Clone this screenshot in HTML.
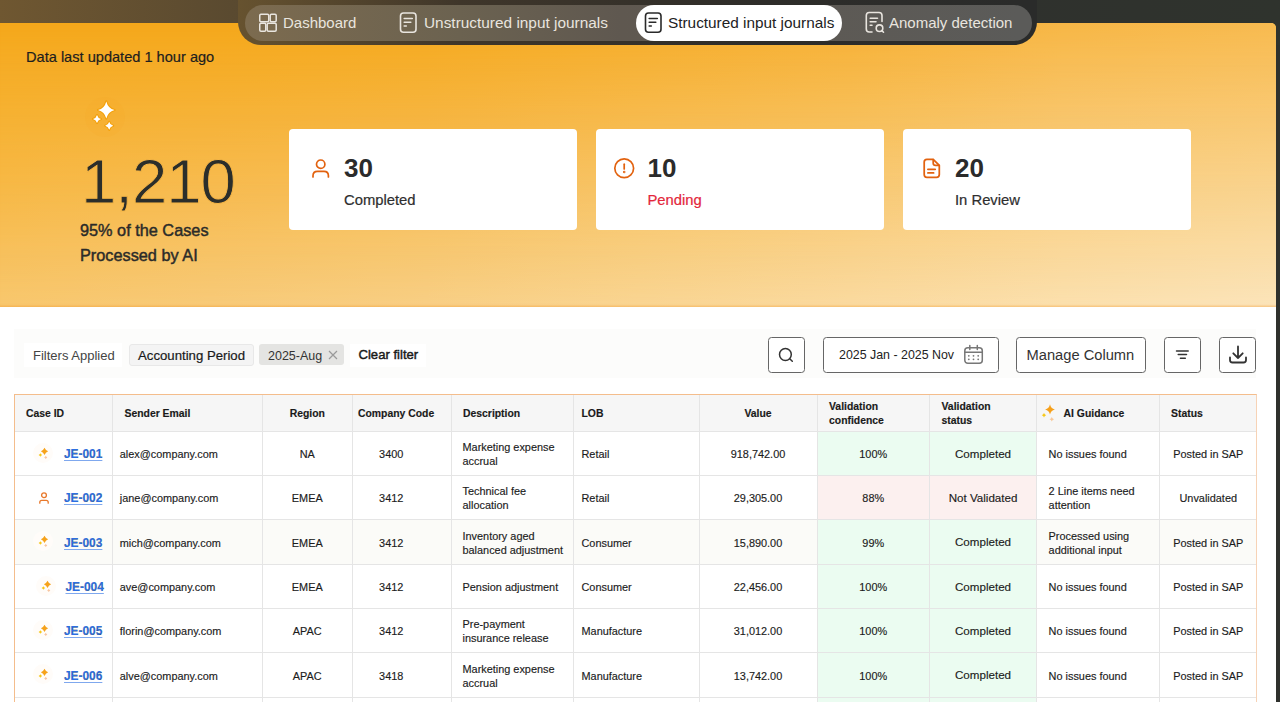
<!DOCTYPE html>
<html><head><meta charset="utf-8">
<style>
*{box-sizing:border-box;margin:0;padding:0}
html,body{width:1280px;height:702px;overflow:hidden}
body{position:relative;background:#2f312d;font-family:"Liberation Sans",sans-serif;color:#222}
.abs{position:absolute;white-space:nowrap}
.topbar{position:absolute;left:0;top:0;width:1280px;height:45px;background:linear-gradient(90deg,#6f5731 0%,#5a4a30 18.1%,#4a3d2a 35.9%,#3a3228 50%,#2f312d 78%,#2f332d 100%)}
.hero{position:absolute;left:0;top:22.5px;width:1276px;height:284.5px;border-top-right-radius:5px;overflow:hidden;background:linear-gradient(90deg,#f5ab23,#f7ba4e)}
.hero .ly{position:absolute;left:0;top:0;width:100%;height:100%}
.hero .sh{position:absolute;left:0;top:0;width:100%;height:100%;box-shadow:inset 0 -2.5px 1.5px -1px rgba(240,150,40,.35)}
.main{position:absolute;left:0;top:307px;width:1276px;height:395px;background:#fff}
.navmask{position:absolute;left:238px;top:0;width:799px;height:45px;border-radius:0 0 23px 23px;overflow:hidden}
.navmask .g{position:absolute;left:-238px;top:0;width:1280px;height:45px;background:linear-gradient(90deg,#6f5731 0%,#66522f 18.75%,#3f362a 35.9%,#2e2d2a 60%,#2a2b2a 80%)}
.navin{position:absolute;left:245px;top:4.8px;width:786.5px;height:36px;border-radius:18px;background:linear-gradient(90deg,#7c6b4f 0%,#6b6250 27.3%,#5f5850 47.7%,#5b5b59 98.5%)}
.tab{position:absolute;top:4.8px;height:36px;line-height:36px;font-size:15px;color:#e9e5df;white-space:nowrap}
.tabact{position:absolute;left:636px;top:4.8px;width:206px;height:36px;border-radius:18px;background:#fff}
.tab svg{position:absolute}
.upd{left:26px;top:49px;font-size:14.6px;color:#1e1e1e;-webkit-text-stroke:0.2px #1e1e1e}
.big{left:81px;top:144.7px;font-size:63.5px;color:#2b2e2b;letter-spacing:-1px;-webkit-text-stroke:0.9px #f6b646}
.sub{left:80px;top:218.4px;font-size:16.3px;line-height:24.8px;color:#2b2b29;-webkit-text-stroke:0.45px #2b2b29}
.card{position:absolute;top:129px;width:288px;height:101px;background:#fff;border-radius:4px}
.card .num{position:absolute;left:55px;top:24px;font-size:26px;font-weight:bold;color:#2b2b2b}
.card .lbl{position:absolute;left:55px;top:63px;font-size:14.8px;color:#2e2e2e;-webkit-text-stroke:0.2px currentColor}
.card svg{position:absolute}
.fbar{position:absolute;left:14px;top:329px;width:1242px;height:49px;background:#fcfcfb}
.btn{position:absolute;top:337px;height:36px;border:1.3px solid #666;border-radius:3.5px;background:#fff}
.btn svg{position:absolute}
.tbl{position:absolute;left:14px;top:394px;width:1243px;height:400px;border:1px solid #f4bd8c;border-right-color:#f7d3b6;border-bottom:none}
.thbg{position:absolute;left:15px;top:395px;width:1241px;height:36.5px;background:#f6f6f6}
.td{position:absolute;display:flex;align-items:center;font-size:10.9px;color:#1c1c1c;white-space:nowrap;padding-top:1.5px;-webkit-text-stroke:0.15px #1c1c1c}
.th{font-weight:bold;font-size:10.4px;line-height:13.5px;color:#1a1a1a;padding-top:2px}
.desc{line-height:14px}
.vs{font-size:11.6px;padding-top:0!important}
.td1 a{color:#2c6fe3;font-weight:bold;font-size:11.9px;text-decoration:underline;text-underline-offset:2px;text-decoration-thickness:1px;text-decoration-color:#7fa8ee}
.rowbg{position:absolute;left:15px;width:1241px}
.vl{position:absolute;top:395px;width:1px;height:310px;background:#e5e5e5}
.hl{position:absolute;left:15px;width:1241px;height:1px;background:#e5e5e5}
.ic{position:absolute}
</style></head><body>
<div class="topbar"></div>
<div class="hero"><div class="ly" style="background:linear-gradient(90deg,#f5a81b 0.0%,#f5a81b 16.7%,#f5a91d 33.4%,#f6ad28 50.0%,#f6b135 66.7%,#f7b746 83.4%,#f8bb50 100.0%)"></div><div class="ly" style="background:linear-gradient(90deg,#f6ac25 0.0%,#f6ac26 16.7%,#f6ae2b 33.4%,#f6b237 50.0%,#f7b643 66.7%,#f8bd55 83.4%,#f8c05e 100.0%);-webkit-mask-image:linear-gradient(to bottom,transparent 0.0px,#000 37.5px);mask-image:linear-gradient(to bottom,transparent 0.0px,#000 37.5px)"></div><div class="ly" style="background:linear-gradient(90deg,#f6b131 0.0%,#f6b236 16.7%,#f6b43d 33.4%,#f7b94a 50.0%,#f7be56 66.7%,#f8c468 83.4%,#f9c871 100.0%);-webkit-mask-image:linear-gradient(to bottom,transparent 37.5px,#000 87.5px);mask-image:linear-gradient(to bottom,transparent 37.5px,#000 87.5px)"></div><div class="ly" style="background:linear-gradient(90deg,#f7b844 0.0%,#f7ba4d 16.7%,#f7bd57 33.4%,#f7c364 50.0%,#f8c871 66.7%,#f9ce81 83.4%,#f9d28b 100.0%);-webkit-mask-image:linear-gradient(to bottom,transparent 87.5px,#000 157.5px);mask-image:linear-gradient(to bottom,transparent 87.5px,#000 157.5px)"></div><div class="ly" style="background:linear-gradient(90deg,#f7c05b 0.0%,#f7c365 16.7%,#f7c770 33.4%,#f8cd7e 50.0%,#f9d28b 66.7%,#fad89a 83.4%,#fadca5 100.0%);-webkit-mask-image:linear-gradient(to bottom,transparent 157.5px,#000 227.5px);mask-image:linear-gradient(to bottom,transparent 157.5px,#000 227.5px)"></div><div class="ly" style="background:linear-gradient(90deg,#f8c76e 0.0%,#f7ca79 16.7%,#f8cf85 33.4%,#f9d593 50.0%,#fadaa0 66.7%,#fbe0ae 83.4%,#fbe4ba 100.0%);-webkit-mask-image:linear-gradient(to bottom,transparent 227.5px,#000 284.5px);mask-image:linear-gradient(to bottom,transparent 227.5px,#000 284.5px)"></div><div class="sh"></div></div>
<div class="main"></div>
<div class="navmask"><div class="g"></div></div>
<div class="navin"></div>
<div class="tabact"></div>

<div class="tab" style="left:283px">Dashboard</div>
<svg class="ic" style="left:258px;top:13px" width="20" height="20" viewBox="0 0 20 20" fill="none" stroke="#e9e5df" stroke-width="1.5"><rect x="1.75" y="1.25" width="9" height="7.5" rx="1.2"/><rect x="12.2" y="1.25" width="6" height="7.5" rx="1.2"/><rect x="1.75" y="10.2" width="6" height="8" rx="1.2"/><rect x="9.2" y="10.2" width="9" height="8" rx="1.2"/></svg>
<div class="tab" style="left:424px;font-size:15.4px">Unstructured input journals</div>
<svg class="ic" style="left:398px;top:11px" width="20" height="23" viewBox="0 0 20 23" fill="none" stroke="#e9e5df" stroke-width="1.6" stroke-linecap="round"><rect x="2.5" y="2" width="15.5" height="19.3" rx="3"/><path d="M6.2 7.5H14.3M6.2 11.3H12.8M6.2 15H8.3"/></svg>
<div class="tab" style="left:668px;color:#222;font-size:15.35px">Structured input journals</div>
<svg class="ic" style="left:643px;top:11px" width="20" height="23" viewBox="0 0 20 23" fill="none" stroke="#2a2a2a" stroke-width="1.6" stroke-linecap="round"><rect x="2.5" y="2" width="15.5" height="19.3" rx="3"/><path d="M6.2 7.5H14.3M6.2 11.3H12.8M6.2 15H8.3"/></svg>
<div class="tab" style="left:889px">Anomaly detection</div>
<svg class="ic" style="left:864px;top:11px" width="22" height="24" viewBox="0 0 22 24" fill="none" stroke="#e9e5df" stroke-width="1.6" stroke-linecap="round"><path d="M8 21H5.2Q2.3 21 2.3 18V4.6Q2.3 1.5 5.2 1.5H15Q18 1.5 18 4.6V10.5"/><path d="M6.2 7.2H13.5M6.2 10.7H12M6.2 14.2H8"/><circle cx="15.5" cy="17.2" r="3.3"/><path d="M17.9 19.6L19.5 21.2"/></svg>

<div class="abs upd">Data last updated 1 hour ago</div>

<svg class="ic" style="left:84px;top:96px" width="44" height="44" viewBox="0 0 44 44"><circle cx="21" cy="21" r="20" fill="#f4a724" opacity=".12"/><g stroke="#f3a00a" stroke-width="2.2" paint-order="stroke" stroke-linejoin="round"><path d="M22.30 5.40Q23.96 12.28 30.60 14.00Q23.96 15.72 22.30 22.60Q20.64 15.72 14.00 14.00Q20.64 12.28 22.30 5.40Z" fill="#fff"/><path d="M13.00 19.00Q13.80 22.20 17.00 23.00Q13.80 23.80 13.00 27.00Q12.20 23.80 9.00 23.00Q12.20 22.20 13.00 19.00Z" fill="#fff"/><path d="M25.20 25.80Q26.00 29.00 29.20 29.80Q26.00 30.60 25.20 33.80Q24.40 30.60 21.20 29.80Q24.40 29.00 25.20 25.80Z" fill="#fff"/></g></svg>
<div class="abs big">1,210</div>
<div class="abs sub">95% of the Cases<br>Processed by AI</div>

<div class="card" style="left:289px"><svg style="left:21px;top:28px" width="22" height="22" viewBox="0 0 22 22" fill="none" stroke="#e2620f" stroke-width="1.7" stroke-linecap="round"><circle cx="10.7" cy="7.2" r="4.2"/><path d="M3 20V18.8Q3 14.4 7.4 14.4H14Q18.4 14.4 18.4 18.8V20"/></svg><div class="num">30</div><div class="lbl">Completed</div></div>
<div class="card" style="left:596px"><svg style="left:17px;top:28px" width="22" height="22" viewBox="0 0 22 22" fill="none" stroke="#e2620f" stroke-width="1.7" stroke-linecap="round"><circle cx="11.2" cy="11.2" r="9.4"/><path d="M11.2 7.2V12"/><circle cx="11.2" cy="15" r=".4" fill="#e2620f"/></svg><div class="num" style="left:51.5px">10</div><div class="lbl" style="color:#e3263b;left:51.5px">Pending</div></div>
<div class="card" style="left:903px"><svg style="left:17px;top:28px" width="22" height="22" viewBox="0 0 22 22" fill="none" stroke="#e2620f" stroke-width="1.75" stroke-linecap="round" stroke-linejoin="round"><path d="M4.2 5Q4.2 2.3 6.9 2.3H13.2L19.3 8.4V17.6Q19.3 20.4 16.5 20.4H6.9Q4.2 20.4 4.2 17.6Z"/><path d="M13.2 2.6V6Q13.2 8.4 15.6 8.4H19"/><path d="M7.9 12.3H15.2M7.9 15.9H13.6"/></svg><div class="num" style="left:52px">20</div><div class="lbl" style="left:52px">In Review</div></div>

<div class="fbar"></div>
<div class="abs" style="left:23.5px;top:343.3px;width:98px;height:23.5px;background:#fff"></div>
<div class="abs" style="left:33px;top:347.5px;font-size:13px;color:#444">Filters Applied</div>
<div class="abs" style="left:129px;top:343.5px;width:124.5px;height:22.5px;background:#f4f4f4;border:1px solid #e8e8e8;border-radius:3px"></div>
<div class="abs" style="left:138px;top:347.5px;font-size:13.2px;color:#1a1a1a;-webkit-text-stroke:0.2px #1a1a1a">Accounting Period</div>
<div class="abs" style="left:259px;top:343.7px;width:84.5px;height:21.5px;background:#e4e4e2;border-radius:3px"></div>
<div class="abs" style="left:268px;top:349px;font-size:12.5px;color:#333">2025-Aug</div>
<svg class="ic" style="left:328px;top:350px" width="10" height="10" viewBox="0 0 10 10" stroke="#9a9a9a" stroke-width="1.2"><path d="M1 1L9 9M9 1L1 9"/></svg>
<div class="abs" style="left:350px;top:343.5px;width:76px;height:23px;background:#fff"></div>
<div class="abs" style="left:358.5px;top:347px;font-size:13.1px;color:#1a1a1a;-webkit-text-stroke:0.45px #1a1a1a">Clear filter</div>

<div class="btn" style="left:768px;width:37px"><svg style="left:8px;top:7.5px" width="18" height="18" viewBox="0 0 18 18" fill="none" stroke="#333" stroke-width="1.5" stroke-linecap="round"><circle cx="8.4" cy="8.5" r="5.9"/><path d="M12.7 12.8L15.3 15.3"/></svg></div>
<div class="btn" style="left:823px;width:176px"></div>
<div class="abs" style="left:839px;top:348px;font-size:12.4px;color:#222">2025 Jan - 2025 Nov</div>
<svg class="ic" style="left:963px;top:344px" width="21" height="21" viewBox="0 0 21 21" fill="none" stroke="#777" stroke-width="1.5" stroke-linecap="round"><rect x="1.8" y="3.8" width="17.5" height="15.5" rx="3"/><path d="M1.8 8.3H19.3M6.8 1.5V5.5M14.3 1.5V5.5"/><g fill="#777" stroke="none"><circle cx="5.8" cy="11.8" r=".9"/><circle cx="10.5" cy="11.8" r=".9"/><circle cx="15.2" cy="11.8" r=".9"/><circle cx="5.8" cy="15.3" r=".9"/><circle cx="10.5" cy="15.3" r=".9"/><circle cx="15.2" cy="15.3" r=".9"/></g></svg>
<div class="btn" style="left:1016px;width:129.5px"></div>
<div class="abs" style="left:1026.5px;top:347px;font-size:14.7px;color:#333">Manage Column</div>
<div class="btn" style="left:1164px;width:37px"><svg style="left:10px;top:11.3px" width="16" height="12" viewBox="0 0 16 12" fill="none" stroke="#333" stroke-width="1.5" stroke-linecap="round"><path d="M1.5 2H13.2M3.2 5.6H11.5M5.4 9.3H10.3"/></svg></div>
<div class="btn" style="left:1219px;width:37px"><svg style="left:8px;top:6px" width="20" height="20" viewBox="0 0 20 20" fill="none" stroke="#333" stroke-width="1.8" stroke-linecap="round" stroke-linejoin="round"><path d="M10 2.5V14M5.3 9.3L10 14L14.7 9.3"/><path d="M2 13.5V16Q2 18.5 4.5 18.5H15.5Q18 18.5 18 16V13.5"/></svg></div>

<div class="tbl"></div>
<div class="thbg"></div>
<div class="rowbg" style="left:817px;width:219.5999999999999px;top:431.5px;height:44.0px;background:#ebfcf1"></div>
<div class="rowbg" style="left:817px;width:219.5999999999999px;top:475.5px;height:44.200000000000045px;background:#fcf0ef"></div>
<div class="rowbg" style="top:519.7px;height:44.299999999999955px;background:#fbfbf8"></div>
<div class="rowbg" style="left:817px;width:219.5999999999999px;top:519.7px;height:44.299999999999955px;background:#ebfcf1"></div>
<div class="rowbg" style="left:817px;width:219.5999999999999px;top:564px;height:44.200000000000045px;background:#ebfcf1"></div>
<div class="rowbg" style="left:817px;width:219.5999999999999px;top:608.2px;height:44.299999999999955px;background:#ebfcf1"></div>
<div class="rowbg" style="left:817px;width:219.5999999999999px;top:652.5px;height:44.5px;background:#ebfcf1"></div>
<div class="rowbg" style="left:817px;width:219.5999999999999px;top:697px;height:44px;background:#ebfcf1"></div>
<div class="vl" style="left:112.0px"></div>
<div class="vl" style="left:261.5px"></div>
<div class="vl" style="left:352.0px"></div>
<div class="vl" style="left:450.5px"></div>
<div class="vl" style="left:573.0px"></div>
<div class="vl" style="left:698.5px"></div>
<div class="vl" style="left:816.5px"></div>
<div class="vl" style="left:929.0px"></div>
<div class="vl" style="left:1036.1px"></div>
<div class="vl" style="left:1159.0px"></div>
<div class="hl" style="top:431.0px"></div>
<div class="hl" style="top:475.0px"></div>
<div class="hl" style="top:519.2px"></div>
<div class="hl" style="top:563.5px"></div>
<div class="hl" style="top:607.7px"></div>
<div class="hl" style="top:652.0px"></div>
<div class="hl" style="top:696.5px"></div>
<div class="td th" style="left:14px;top:394px;width:98.5px;height:37.5px;padding-left:12px;justify-content:flex-start;"><div>Case ID</div></div>
<div class="td th" style="left:112.5px;top:394px;width:149.5px;height:37.5px;padding-left:12px;justify-content:flex-start;"><div>Sender Email</div></div>
<div class="td th" style="left:262px;top:394px;width:90.5px;height:37.5px;justify-content:center;padding-left:0px;"><div>Region</div></div>
<div class="td th" style="left:352.5px;top:394px;width:98.5px;height:37.5px;padding-left:5.5px;justify-content:flex-start;"><div>Company Code</div></div>
<div class="td th" style="left:451px;top:394px;width:122.5px;height:37.5px;padding-left:12px;justify-content:flex-start;"><div>Description</div></div>
<div class="td th" style="left:573.5px;top:394px;width:125.5px;height:37.5px;padding-left:8px;justify-content:flex-start;"><div>LOB</div></div>
<div class="td th" style="left:699px;top:394px;width:118px;height:37.5px;justify-content:center;padding-left:0px;"><div>Value</div></div>
<div class="td th" style="left:817px;top:394px;width:112.5px;height:37.5px;padding-left:12px;justify-content:flex-start;"><div>Validation<br>confidence</div></div>
<div class="td th" style="left:929.5px;top:394px;width:107.09999999999991px;height:37.5px;padding-left:12px;justify-content:flex-start;"><div>Validation<br>status</div></div>
<div class="td th" style="left:1036.6px;top:394px;width:122.90000000000009px;height:37.5px;padding-left:27px;justify-content:flex-start;"><div>AI Guidance</div></div>
<div class="td th" style="left:1159.5px;top:394px;width:97.5px;height:37.5px;padding-left:11.5px;justify-content:flex-start;"><div>Status</div></div>
<svg class="ic" width="22" height="22" viewBox="0 0 22 22" style="left:32px;top:442.0px"><circle cx="11" cy="11" r="10" fill="#fffcf9"/><path d="M12.50 5.70Q13.58 8.22 16.10 9.30Q13.58 10.38 12.50 12.90Q11.42 10.38 8.90 9.30Q11.42 8.22 12.50 5.70Z" fill="#f6a21a"/><path d="M8.40 11.20Q8.94 12.46 10.20 13.00Q8.94 13.54 8.40 14.80Q7.86 13.54 6.60 13.00Q7.86 12.46 8.40 11.20Z" fill="#f6c81a"/><path d="M13.75 13.80Q14.23 14.92 15.35 15.40Q14.23 15.88 13.75 17.00Q13.27 15.88 12.15 15.40Q13.27 14.92 13.75 13.80Z" fill="#f8c6a0"/></svg>
<div class="td td1" style="left:14px;top:431.5px;width:98.5px;height:44.0px;padding-left:50.0px;justify-content:flex-start;"><div><a>JE-001</a></div></div>
<div class="td " style="left:112.5px;top:431.5px;width:149.5px;height:44.0px;padding-left:7.3px;justify-content:flex-start;"><div>alex@company.com</div></div>
<div class="td " style="left:262px;top:431.5px;width:90.5px;height:44.0px;justify-content:center;padding-left:0px;"><div>NA</div></div>
<div class="td " style="left:352.5px;top:431.5px;width:98.5px;height:44.0px;padding-left:26.6px;justify-content:flex-start;"><div>3400</div></div>
<div class="td desc" style="left:451px;top:431.5px;width:122.5px;height:44.0px;padding-left:11.5px;justify-content:flex-start;"><div>Marketing expense<br>accrual</div></div>
<div class="td " style="left:573.5px;top:431.5px;width:125.5px;height:44.0px;padding-left:8px;justify-content:flex-start;"><div>Retail</div></div>
<div class="td " style="left:699px;top:431.5px;width:118px;height:44.0px;justify-content:center;padding-left:0px;"><div>918,742.00</div></div>
<div class="td " style="left:817px;top:431.5px;width:112.5px;height:44.0px;justify-content:center;padding-left:0px;"><div>100%</div></div>
<div class="td vs" style="left:929.5px;top:431.5px;width:107.09999999999991px;height:44.0px;justify-content:center;padding-left:0px;"><div>Completed</div></div>
<div class="td desc" style="left:1036.6px;top:431.5px;width:122.90000000000009px;height:44.0px;padding-left:12px;justify-content:flex-start;"><div>No issues found</div></div>
<div class="td " style="left:1159.5px;top:431.5px;width:97.5px;height:44.0px;justify-content:center;padding-left:0px;"><div>Posted in SAP</div></div>
<svg class="ic" width="14" height="14" viewBox="0 0 14 14" style="left:36.5px;top:490.6px" fill="none" stroke="#e8782a" stroke-width="1.3" stroke-linecap="round"><circle cx="7" cy="4.2" r="2.4"/><path d="M2.8 12.2 V11.2 Q2.8 9.3 4.8 9.3 H9.2 Q11.2 9.3 11.2 11.2 V12.2"/></svg>
<div class="td td1" style="left:14px;top:475.5px;width:98.5px;height:44.200000000000045px;padding-left:50.0px;justify-content:flex-start;"><div><a>JE-002</a></div></div>
<div class="td " style="left:112.5px;top:475.5px;width:149.5px;height:44.200000000000045px;padding-left:7.3px;justify-content:flex-start;"><div>jane@company.com</div></div>
<div class="td " style="left:262px;top:475.5px;width:90.5px;height:44.200000000000045px;justify-content:center;padding-left:0px;"><div>EMEA</div></div>
<div class="td " style="left:352.5px;top:475.5px;width:98.5px;height:44.200000000000045px;padding-left:26.6px;justify-content:flex-start;"><div>3412</div></div>
<div class="td desc" style="left:451px;top:475.5px;width:122.5px;height:44.200000000000045px;padding-left:11.5px;justify-content:flex-start;"><div>Technical fee<br>allocation</div></div>
<div class="td " style="left:573.5px;top:475.5px;width:125.5px;height:44.200000000000045px;padding-left:8px;justify-content:flex-start;"><div>Retail</div></div>
<div class="td " style="left:699px;top:475.5px;width:118px;height:44.200000000000045px;justify-content:center;padding-left:0px;"><div>29,305.00</div></div>
<div class="td " style="left:817px;top:475.5px;width:112.5px;height:44.200000000000045px;justify-content:center;padding-left:0px;"><div>88%</div></div>
<div class="td vs" style="left:929.5px;top:475.5px;width:107.09999999999991px;height:44.200000000000045px;justify-content:center;padding-left:0px;"><div>Not Validated</div></div>
<div class="td desc" style="left:1036.6px;top:475.5px;width:122.90000000000009px;height:44.200000000000045px;padding-left:12px;justify-content:flex-start;"><div>2 Line items need<br>attention</div></div>
<div class="td " style="left:1159.5px;top:475.5px;width:97.5px;height:44.200000000000045px;justify-content:center;padding-left:0px;"><div>Unvalidated</div></div>
<svg class="ic" width="22" height="22" viewBox="0 0 22 22" style="left:32px;top:530.35px"><circle cx="11" cy="11" r="10" fill="#fffcf9"/><path d="M12.50 5.70Q13.58 8.22 16.10 9.30Q13.58 10.38 12.50 12.90Q11.42 10.38 8.90 9.30Q11.42 8.22 12.50 5.70Z" fill="#f6a21a"/><path d="M8.40 11.20Q8.94 12.46 10.20 13.00Q8.94 13.54 8.40 14.80Q7.86 13.54 6.60 13.00Q7.86 12.46 8.40 11.20Z" fill="#f6c81a"/><path d="M13.75 13.80Q14.23 14.92 15.35 15.40Q14.23 15.88 13.75 17.00Q13.27 15.88 12.15 15.40Q13.27 14.92 13.75 13.80Z" fill="#f8c6a0"/></svg>
<div class="td td1" style="left:14px;top:519.7px;width:98.5px;height:44.299999999999955px;padding-left:50.0px;justify-content:flex-start;"><div><a>JE-003</a></div></div>
<div class="td " style="left:112.5px;top:519.7px;width:149.5px;height:44.299999999999955px;padding-left:7.3px;justify-content:flex-start;"><div>mich@company.com</div></div>
<div class="td " style="left:262px;top:519.7px;width:90.5px;height:44.299999999999955px;justify-content:center;padding-left:0px;"><div>EMEA</div></div>
<div class="td " style="left:352.5px;top:519.7px;width:98.5px;height:44.299999999999955px;padding-left:26.6px;justify-content:flex-start;"><div>3412</div></div>
<div class="td desc" style="left:451px;top:519.7px;width:122.5px;height:44.299999999999955px;padding-left:11.5px;justify-content:flex-start;"><div>Inventory aged<br>balanced adjustment</div></div>
<div class="td " style="left:573.5px;top:519.7px;width:125.5px;height:44.299999999999955px;padding-left:8px;justify-content:flex-start;"><div>Consumer</div></div>
<div class="td " style="left:699px;top:519.7px;width:118px;height:44.299999999999955px;justify-content:center;padding-left:0px;"><div>15,890.00</div></div>
<div class="td " style="left:817px;top:519.7px;width:112.5px;height:44.299999999999955px;justify-content:center;padding-left:0px;"><div>99%</div></div>
<div class="td vs" style="left:929.5px;top:519.7px;width:107.09999999999991px;height:44.299999999999955px;justify-content:center;padding-left:0px;"><div>Completed</div></div>
<div class="td desc" style="left:1036.6px;top:519.7px;width:122.90000000000009px;height:44.299999999999955px;padding-left:12px;justify-content:flex-start;"><div>Processed using<br>additional input</div></div>
<div class="td " style="left:1159.5px;top:519.7px;width:97.5px;height:44.299999999999955px;justify-content:center;padding-left:0px;"><div>Posted in SAP</div></div>
<svg class="ic" width="22" height="22" viewBox="0 0 22 22" style="left:34.5px;top:574.6px"><circle cx="11" cy="11" r="10" fill="#fffcf9"/><path d="M12.50 5.70Q13.58 8.22 16.10 9.30Q13.58 10.38 12.50 12.90Q11.42 10.38 8.90 9.30Q11.42 8.22 12.50 5.70Z" fill="#f6a21a"/><path d="M8.40 11.20Q8.94 12.46 10.20 13.00Q8.94 13.54 8.40 14.80Q7.86 13.54 6.60 13.00Q7.86 12.46 8.40 11.20Z" fill="#f6c81a"/><path d="M13.75 13.80Q14.23 14.92 15.35 15.40Q14.23 15.88 13.75 17.00Q13.27 15.88 12.15 15.40Q13.27 14.92 13.75 13.80Z" fill="#f8c6a0"/></svg>
<div class="td td1" style="left:14px;top:564px;width:98.5px;height:44.200000000000045px;padding-left:51.5px;justify-content:flex-start;"><div><a>JE-004</a></div></div>
<div class="td " style="left:112.5px;top:564px;width:149.5px;height:44.200000000000045px;padding-left:7.3px;justify-content:flex-start;"><div>ave@company.com</div></div>
<div class="td " style="left:262px;top:564px;width:90.5px;height:44.200000000000045px;justify-content:center;padding-left:0px;"><div>EMEA</div></div>
<div class="td " style="left:352.5px;top:564px;width:98.5px;height:44.200000000000045px;padding-left:26.6px;justify-content:flex-start;"><div>3412</div></div>
<div class="td desc" style="left:451px;top:564px;width:122.5px;height:44.200000000000045px;padding-left:11.5px;justify-content:flex-start;"><div>Pension adjustment</div></div>
<div class="td " style="left:573.5px;top:564px;width:125.5px;height:44.200000000000045px;padding-left:8px;justify-content:flex-start;"><div>Consumer</div></div>
<div class="td " style="left:699px;top:564px;width:118px;height:44.200000000000045px;justify-content:center;padding-left:0px;"><div>22,456.00</div></div>
<div class="td " style="left:817px;top:564px;width:112.5px;height:44.200000000000045px;justify-content:center;padding-left:0px;"><div>100%</div></div>
<div class="td vs" style="left:929.5px;top:564px;width:107.09999999999991px;height:44.200000000000045px;justify-content:center;padding-left:0px;"><div>Completed</div></div>
<div class="td desc" style="left:1036.6px;top:564px;width:122.90000000000009px;height:44.200000000000045px;padding-left:12px;justify-content:flex-start;"><div>No issues found</div></div>
<div class="td " style="left:1159.5px;top:564px;width:97.5px;height:44.200000000000045px;justify-content:center;padding-left:0px;"><div>Posted in SAP</div></div>
<svg class="ic" width="22" height="22" viewBox="0 0 22 22" style="left:32px;top:618.85px"><circle cx="11" cy="11" r="10" fill="#fffcf9"/><path d="M12.50 5.70Q13.58 8.22 16.10 9.30Q13.58 10.38 12.50 12.90Q11.42 10.38 8.90 9.30Q11.42 8.22 12.50 5.70Z" fill="#f6a21a"/><path d="M8.40 11.20Q8.94 12.46 10.20 13.00Q8.94 13.54 8.40 14.80Q7.86 13.54 6.60 13.00Q7.86 12.46 8.40 11.20Z" fill="#f6c81a"/><path d="M13.75 13.80Q14.23 14.92 15.35 15.40Q14.23 15.88 13.75 17.00Q13.27 15.88 12.15 15.40Q13.27 14.92 13.75 13.80Z" fill="#f8c6a0"/></svg>
<div class="td td1" style="left:14px;top:608.2px;width:98.5px;height:44.299999999999955px;padding-left:50.0px;justify-content:flex-start;"><div><a>JE-005</a></div></div>
<div class="td " style="left:112.5px;top:608.2px;width:149.5px;height:44.299999999999955px;padding-left:7.3px;justify-content:flex-start;"><div>florin@company.com</div></div>
<div class="td " style="left:262px;top:608.2px;width:90.5px;height:44.299999999999955px;justify-content:center;padding-left:0px;"><div>APAC</div></div>
<div class="td " style="left:352.5px;top:608.2px;width:98.5px;height:44.299999999999955px;padding-left:26.6px;justify-content:flex-start;"><div>3412</div></div>
<div class="td desc" style="left:451px;top:608.2px;width:122.5px;height:44.299999999999955px;padding-left:11.5px;justify-content:flex-start;"><div>Pre-payment<br>insurance release</div></div>
<div class="td " style="left:573.5px;top:608.2px;width:125.5px;height:44.299999999999955px;padding-left:8px;justify-content:flex-start;"><div>Manufacture</div></div>
<div class="td " style="left:699px;top:608.2px;width:118px;height:44.299999999999955px;justify-content:center;padding-left:0px;"><div>31,012.00</div></div>
<div class="td " style="left:817px;top:608.2px;width:112.5px;height:44.299999999999955px;justify-content:center;padding-left:0px;"><div>100%</div></div>
<div class="td vs" style="left:929.5px;top:608.2px;width:107.09999999999991px;height:44.299999999999955px;justify-content:center;padding-left:0px;"><div>Completed</div></div>
<div class="td desc" style="left:1036.6px;top:608.2px;width:122.90000000000009px;height:44.299999999999955px;padding-left:12px;justify-content:flex-start;"><div>No issues found</div></div>
<div class="td " style="left:1159.5px;top:608.2px;width:97.5px;height:44.299999999999955px;justify-content:center;padding-left:0px;"><div>Posted in SAP</div></div>
<svg class="ic" width="22" height="22" viewBox="0 0 22 22" style="left:32px;top:663.25px"><circle cx="11" cy="11" r="10" fill="#fffcf9"/><path d="M12.50 5.70Q13.58 8.22 16.10 9.30Q13.58 10.38 12.50 12.90Q11.42 10.38 8.90 9.30Q11.42 8.22 12.50 5.70Z" fill="#f6a21a"/><path d="M8.40 11.20Q8.94 12.46 10.20 13.00Q8.94 13.54 8.40 14.80Q7.86 13.54 6.60 13.00Q7.86 12.46 8.40 11.20Z" fill="#f6c81a"/><path d="M13.75 13.80Q14.23 14.92 15.35 15.40Q14.23 15.88 13.75 17.00Q13.27 15.88 12.15 15.40Q13.27 14.92 13.75 13.80Z" fill="#f8c6a0"/></svg>
<div class="td td1" style="left:14px;top:652.5px;width:98.5px;height:44.5px;padding-left:50.0px;justify-content:flex-start;"><div><a>JE-006</a></div></div>
<div class="td " style="left:112.5px;top:652.5px;width:149.5px;height:44.5px;padding-left:7.3px;justify-content:flex-start;"><div>alve@company.com</div></div>
<div class="td " style="left:262px;top:652.5px;width:90.5px;height:44.5px;justify-content:center;padding-left:0px;"><div>APAC</div></div>
<div class="td " style="left:352.5px;top:652.5px;width:98.5px;height:44.5px;padding-left:26.6px;justify-content:flex-start;"><div>3418</div></div>
<div class="td desc" style="left:451px;top:652.5px;width:122.5px;height:44.5px;padding-left:11.5px;justify-content:flex-start;"><div>Marketing expense<br>accrual</div></div>
<div class="td " style="left:573.5px;top:652.5px;width:125.5px;height:44.5px;padding-left:8px;justify-content:flex-start;"><div>Manufacture</div></div>
<div class="td " style="left:699px;top:652.5px;width:118px;height:44.5px;justify-content:center;padding-left:0px;"><div>13,742.00</div></div>
<div class="td " style="left:817px;top:652.5px;width:112.5px;height:44.5px;justify-content:center;padding-left:0px;"><div>100%</div></div>
<div class="td vs" style="left:929.5px;top:652.5px;width:107.09999999999991px;height:44.5px;justify-content:center;padding-left:0px;"><div>Completed</div></div>
<div class="td desc" style="left:1036.6px;top:652.5px;width:122.90000000000009px;height:44.5px;padding-left:12px;justify-content:flex-start;"><div>No issues found</div></div>
<div class="td " style="left:1159.5px;top:652.5px;width:97.5px;height:44.5px;justify-content:center;padding-left:0px;"><div>Posted in SAP</div></div>
<svg class="ic" width="22" height="22" viewBox="0 0 22 22" style="left:32px;top:707.5px"><circle cx="11" cy="11" r="10" fill="#fffcf9"/><path d="M12.50 5.70Q13.58 8.22 16.10 9.30Q13.58 10.38 12.50 12.90Q11.42 10.38 8.90 9.30Q11.42 8.22 12.50 5.70Z" fill="#f6a21a"/><path d="M8.40 11.20Q8.94 12.46 10.20 13.00Q8.94 13.54 8.40 14.80Q7.86 13.54 6.60 13.00Q7.86 12.46 8.40 11.20Z" fill="#f6c81a"/><path d="M13.75 13.80Q14.23 14.92 15.35 15.40Q14.23 15.88 13.75 17.00Q13.27 15.88 12.15 15.40Q13.27 14.92 13.75 13.80Z" fill="#f8c6a0"/></svg>
<div class="td td1" style="left:14px;top:697px;width:98.5px;height:44px;padding-left:50.0px;justify-content:flex-start;"><div><a>JE-007</a></div></div>
<div class="td " style="left:112.5px;top:697px;width:149.5px;height:44px;padding-left:7.3px;justify-content:flex-start;"><div>tom@company.com</div></div>
<div class="td " style="left:262px;top:697px;width:90.5px;height:44px;justify-content:center;padding-left:0px;"><div>NA</div></div>
<div class="td " style="left:352.5px;top:697px;width:98.5px;height:44px;padding-left:26.6px;justify-content:flex-start;"><div>3400</div></div>
<div class="td desc" style="left:451px;top:697px;width:122.5px;height:44px;padding-left:11.5px;justify-content:flex-start;"><div>Accrual reversal</div></div>
<div class="td " style="left:573.5px;top:697px;width:125.5px;height:44px;padding-left:8px;justify-content:flex-start;"><div>Retail</div></div>
<div class="td " style="left:699px;top:697px;width:118px;height:44px;justify-content:center;padding-left:0px;"><div>10,000.00</div></div>
<div class="td " style="left:817px;top:697px;width:112.5px;height:44px;justify-content:center;padding-left:0px;"><div>100%</div></div>
<div class="td vs" style="left:929.5px;top:697px;width:107.09999999999991px;height:44px;justify-content:center;padding-left:0px;"><div>Completed</div></div>
<div class="td desc" style="left:1036.6px;top:697px;width:122.90000000000009px;height:44px;padding-left:12px;justify-content:flex-start;"><div>No issues found</div></div>
<div class="td " style="left:1159.5px;top:697px;width:97.5px;height:44px;justify-content:center;padding-left:0px;"><div>Posted in SAP</div></div>
<svg class="ic" style="left:1038px;top:401px" width="22" height="22" viewBox="0 0 22 22"><path d="M12.00 3.20Q12.83 7.52 16.90 8.40Q12.83 9.28 12.00 13.60Q11.17 9.28 7.10 8.40Q11.17 7.52 12.00 3.20Z" fill="#f6a01a"/><path d="M6.00 12.00Q6.55 13.65 8.20 14.20Q6.55 14.75 6.00 16.40Q5.45 14.75 3.80 14.20Q5.45 13.65 6.00 12.00Z" fill="#f6c81a"/><path d="M13.80 15.90Q14.38 17.62 16.10 18.20Q14.38 18.77 13.80 20.50Q13.23 18.77 11.50 18.20Q13.23 17.62 13.80 15.90Z" fill="#f8c898"/></svg>
</body></html>
